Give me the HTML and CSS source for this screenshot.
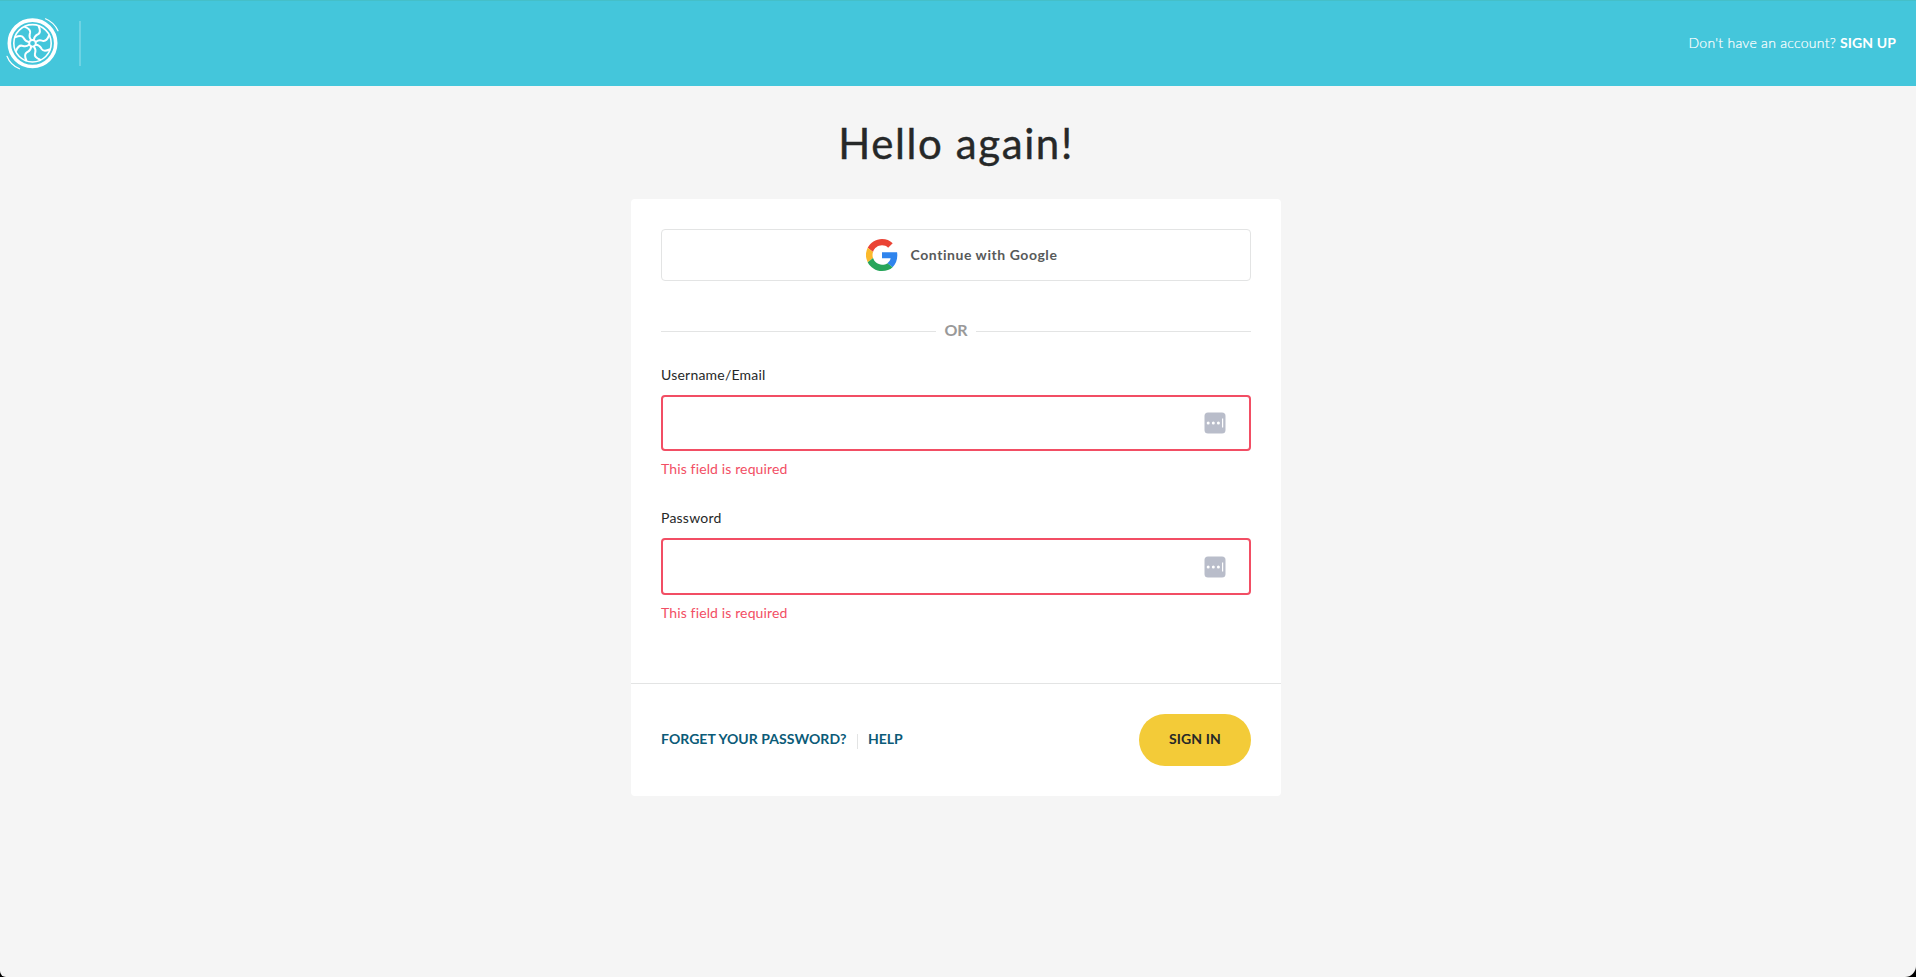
FILE: index.html
```html
<!DOCTYPE html>
<html lang="en">
<head>
<meta charset="utf-8">
<title>Sign in</title>
<link rel="stylesheet" href="styles.css">
</head>
<body>
<header class="topbar">
  <a class="brand" href="#" aria-label="Home">
    <svg width="54" height="54" viewBox="-27.500 -27.300 54 54" fill="none" stroke="#fff" stroke-linecap="round">
      <defs><path id="spoke" d="M-1.500-3.500C-4-6.500-3-8-2.400-10.500C-1.800-13.500-4-15-7.600-16.400"/></defs>
      <circle r="23.200" stroke-width="3.600"/>
      <circle r="18.700" stroke-width="1.600"/>
      <circle r="3.300" stroke-width="1.900"/>
      <g stroke-width="2">
        <use href="#spoke"/><use href="#spoke" transform="rotate(45)"/><use href="#spoke" transform="rotate(90)"/><use href="#spoke" transform="rotate(135)"/>
        <use href="#spoke" transform="rotate(180)"/><use href="#spoke" transform="rotate(225)"/><use href="#spoke" transform="rotate(270)"/><use href="#spoke" transform="rotate(315)"/>
      </g>
      <path stroke-width="1.200" d="M13-24.500Q21.500-21 25.500-12.500M-13 25.500Q-22 22-25.500 13"/>
    </svg>
  </a>
  <span class="topbar-rule"></span>
  <p class="signup"><span class="signup-text">Don't have an account?</span> <a class="signup-link" href="#">SIGN UP</a></p>
</header>
<main class="page">
  <h1 class="title">Hello again!</h1>
  <form class="card">
    <div class="card-body">
      <button class="google" type="button">
        <svg width="32" height="32" viewBox="0 0 48 48">
          <path fill="#ea4335" d="M24 9.500c3.540 0 6.710 1.220 9.210 3.600l6.850-6.850C35.900 2.380 30.470 0 24 0 14.620 0 6.510 5.380 2.560 13.220l7.980 6.190C12.430 13.720 17.740 9.500 24 9.500z"/>
          <path fill="#2f84ed" d="M46.980 24.550c0-1.570-.15-3.090-.38-4.550H24v9.020h12.940c-.58 2.960-2.260 5.480-4.780 7.180l7.730 6c4.510-4.180 7.090-10.360 7.090-17.650z"/>
          <path fill="#fbb92c" d="M10.530 28.590A14.500 14.500 0 0 1 10.530 19.410L2.550 13.220A23.900 23.900 0 0 0 2.560 34.780z"/>
          <path fill="#27a55b" d="M24 48c6.480 0 11.930-2.130 15.890-5.810l-7.730-6c-2.150 1.450-4.920 2.300-8.160 2.300-6.260 0-11.570-4.220-13.470-9.910l-7.980 6.190C6.510 42.620 14.620 48 24 48z"/>
        </svg>
        <span class="google-text">Continue with Google</span>
      </button>
      <div class="divider"><span class="divider-text">OR</span></div>
      <div class="field">
        <label class="label" for="user">Username/Email</label>
        <div class="control">
          <input class="input" id="user" type="text">
          <svg class="manager" width="22" height="22" viewBox="0 0 22 22"><rect x=".5" y=".5" width="21" height="21" rx="3.500" fill="#b9bdca"/><g fill="#fff"><circle cx="4.200" cy="11" r="1.500"/><circle cx="9.300" cy="11" r="1.500"/><circle cx="14.400" cy="11" r="1.500"/><rect x="18" y="6.500" width="1.200" height="9"/></g></svg>
        </div>
        <p class="error">This field is required</p>
      </div>
      <div class="field field-password">
        <label class="label" for="pass">Password</label>
        <div class="control">
          <input class="input" id="pass" type="password">
          <svg class="manager" width="22" height="22" viewBox="0 0 22 22"><rect x=".5" y=".5" width="21" height="21" rx="3.500" fill="#b9bdca"/><g fill="#fff"><circle cx="4.200" cy="11" r="1.500"/><circle cx="9.300" cy="11" r="1.500"/><circle cx="14.400" cy="11" r="1.500"/><rect x="18" y="6.500" width="1.200" height="9"/></g></svg>
        </div>
        <p class="error">This field is required</p>
      </div>
    </div>
    <footer class="card-footer">
      <a class="link link-forgot" href="#">FORGET YOUR PASSWORD?</a>
      <span class="link-rule"></span>
      <a class="link link-help" href="#">HELP</a>
      <button class="submit" type="button">SIGN IN</button>
    </footer>
  </form>
</main>
</body>
</html>
```

FILE: styles.css
```css
* { box-sizing: border-box; }
html { background: #000; }
body {
  margin: 0;
  height: 977px;
  overflow: hidden;
  background: #f5f5f5;
  border-radius: 0 0 11px 6px;
  font-family: Lato, "Open Sans", sans-serif;
  color: #262828;
}
p, h1 { margin: 0; }
a { text-decoration: none; }
button, input { font: inherit; }

.topbar {
  display: flex;
  align-items: center;
  height: 86px;
  padding: 0 20px 1px 6px;
  background: #44c6db;
  border-top: 1px solid #45bfc8;
  color: #fff;
}
.brand { display: flex; width: 54px; margin-left: -1px; }
.topbar-rule {
  width: 2px;
  height: 45px;
  margin-left: 20px;
  background: #6ed3e3;
}
.signup {
  display: flex;
  gap: 4px;
  margin-left: auto;
  padding-bottom: 1px;
  font-size: 14px;
  line-height: 20px;
}
.signup-text { font-weight: 300; letter-spacing: .27px; -webkit-text-stroke: .2px #fff; }
.signup-link { color: #fff; font-weight: 700; letter-spacing: .1px; }

.page {
  display: flex;
  flex-direction: column;
  align-items: center;
  padding-right: 4px;
}
.title {
  height: 113px;
  padding-top: 30px;
  font-size: 42px;
  line-height: 54px;
  font-weight: 400;
  letter-spacing: 1.6px;
  -webkit-text-stroke: .4px #262828;
}
.card {
  width: 650px;
  height: 597px;
  background: #fff;
  border-radius: 4px;
}
.card-body { height: 484px; padding: 30px 30px 0; }
.google {
  display: flex;
  align-items: center;
  justify-content: center;
  gap: 13px;
  width: 100%;
  height: 52px;
  padding: 0 0 0 11px;
  background: #fff;
  border: 1px solid #e3e4e4;
  border-radius: 4px;
  color: #585a5a;
  font-size: 14px;
  font-weight: 700;
}
.google-text { padding-bottom: 2px; letter-spacing: .55px; }
.divider {
  display: flex;
  align-items: center;
  gap: 8px;
  height: 20px;
  margin-top: 40px;
  color: #999;
  font-size: 16px;
  font-weight: 700;
}
.divider-text { padding-bottom: 3px; }
.divider::before, .divider::after {
  content: "";
  flex: 1;
  height: 1px;
  background: #e3e4e4;
}
.field { margin-top: 24px; }
.field-password { margin-top: 29px; }
.label {
  display: block;
  height: 30px;
  font-size: 14px;
  line-height: 20px;
  letter-spacing: .22px;
}
.control { position: relative; height: 56px; }
.field-password .control { height: 57px; }
.input {
  display: block;
  width: 100%;
  height: 100%;
  padding: 0 60px 0 14px;
  background: #fff;
  border: 2px solid #f24e64;
  border-radius: 4px;
  outline: 0;
}
.manager { position: absolute; right: 25px; top: 17px; }
.field-password .manager { top: 18px; }
.error {
  height: 20px;
  margin-top: 8px;
  color: #f24e64;
  font-size: 14px;
  line-height: 20px;
  letter-spacing: .13px;
}
.card-footer {
  display: flex;
  align-items: center;
  height: 113px;
  padding: 0 30px;
  border-top: 1px solid #e3e4e4;
}
.link {
  padding-bottom: 2px;
  color: #0b5b78;
  font-size: 14px;
  line-height: 20px;
  font-weight: 700;
  white-space: nowrap;
}
.link-forgot { width: 186px; letter-spacing: .05px; }
.link-rule { width: 1px; height: 15px; margin: 2px 10px 0; background: #e3e4e4; }
.link-help { letter-spacing: 0; }
.submit {
  width: 112px;
  height: 52px;
  margin-left: auto;
  padding: 0 0 3px;
  background: #f3cb38;
  border: 0;
  border-radius: 26px;
  color: #262828;
  font-size: 14px;
  font-weight: 700;
  letter-spacing: .1px;
}
```
